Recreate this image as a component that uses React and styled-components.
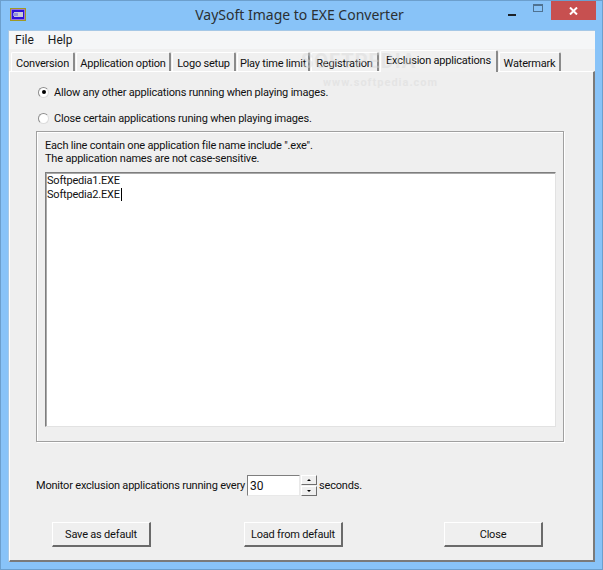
import styled, { createGlobalStyle } from "styled-components";

const Global = createGlobalStyle`
html, body {
    margin: 0;
    padding: 0;
    background: #88c3f8;
}
* {
    box-sizing: border-box;
}
`

const Window = styled.div`
    position: relative;
    width: 603px;
    height: 570px;
    display: flex;
    flex-direction: column;
    padding: 0 7px 7px;
    background: #88c3f8;
    border: 1px solid #6c9fcd;
    font-family: Roboto, "Liberation Sans", Arial, sans-serif;
    font-size: 11px;
    letter-spacing: -0.2px;
    color: #111;
    overflow: hidden;
`

const TitleBar = styled.div`
    height: 29px;
    flex: none;
    display: grid;
    grid-template-columns: 1fr auto 1fr;
    align-items: start;
`

const AppIcon = styled.svg`
    display: block;
    width: 16px;
    height: 13px;
    margin: 7px 0 0 2px;
`

const Title = styled.div`
    font-family: "Noto Sans", "Open Sans", sans-serif;
    font-size: 14px;
    letter-spacing: 0;
    line-height: 20px;
    margin-top: 4px;
    padding-right: 4px;
    color: #2b3033;
`

const Controls = styled.div`
    display: flex;
    justify-content: flex-end;
    height: 19px;
    margin-right: -1px;
`

const CtrlButton = styled.div`
    width: ${({ wide }) => wide ? '45px' : '26px'};
    height: 19px;
    display: flex;
    align-items: center;
    justify-content: center;
    background: ${({ wide }) => wide ? '#c75050' : 'transparent'};
`

const MinGlyph = styled.div`
    width: 8px;
    height: 2px;
    margin-top: 8px;
    background: #1c2228;
`

const MaxGlyph = styled.div`
    width: 10px;
    height: 8px;
    margin-top: -5px;
    border: 1px solid #4f7291;
    border-top-width: 2px;
`

const Client = styled.div`
    flex: 1;
    display: flex;
    flex-direction: column;
    background: #f0f0f0;
    border: 1px solid #a6c8e6;
    border-width: 1px 0 0 1px;
`

const MenuBar = styled.div`
    height: 18px;
    flex: none;
    display: flex;
    gap: 14px;
    align-items: center;
    padding-left: 6px;
    background: #f5f6f7;
    color: #1a1a1a;
`

const MenuItem = styled.span`
    font-size: 12px;
    letter-spacing: 0;
`

const TabRow = styled.div`
    height: 22px;
    flex: none;
    display: flex;
    align-items: flex-end;
    padding-left: 2px;
    gap: 1px;
    position: relative;
    z-index: 1;
`

const Tab = styled.div`
    height: ${({ active }) => active ? '22px' : '19px'};
    width: ${({ w }) => w}px;
    margin-bottom: ${({ active }) => active ? '-1px' : '0'};
    padding: ${({ active }) => active ? '0 0 2px' : '2px 0 0'};
    display: flex;
    align-items: center;
    justify-content: center;
    white-space: nowrap;
    background: #f0f0f0;
    border-top: 1px solid #fff;
    border-left: 1px solid #fff;
    border-right: 2px solid #8a8a8a;
    border-radius: 2px 2px 0 0;
`

const Panel = styled.div`
    flex: 1;
    display: flex;
    flex-direction: column;
    padding: 0 0 0 26px;
    background: #efefef;
    border-top: 1px solid #fff;
    border-left: 1px solid #fff;
    border-right: 2px solid #7a7a7a;
    border-bottom: 2px solid #7a7a7a;
`

const RadioRow = styled.div`
    display: flex;
    align-items: center;
    height: 14px;
    margin-top: ${({ top }) => top}px;
    padding-left: 2px;
`

const Radio = styled.span`
    width: 11px;
    height: 11px;
    flex: none;
    margin-right: 5px;
    border-radius: 50%;
    display: flex;
    align-items: center;
    justify-content: center;
    background: #fff;
    border: 1px solid #8d8d8d;
    border-right-color: #dcdcdc;
    border-bottom-color: #dcdcdc;
    &::after {
        content: "";
        display: ${({ checked }) => checked ? 'block' : 'none'};
        width: 4px;
        height: 4px;
        border-radius: 50%;
        background: #000;
    }
`

const GroupBox = styled.div`
    width: 528px;
    height: 311px;
    margin-top: 6px;
    padding: 7px 8px 0;
    border: 1px solid #a0a0a0;
    box-shadow: 1px 1px 0 #fff, inset 1px 1px 0 #fff;
`

const Hint = styled.div`
    line-height: 13px;
`

const Editor = styled.div`
    width: 511px;
    height: 255px;
    margin-top: 7px;
    padding: 1px 1px;
    background: #fff;
    border: 1px solid;
    border-color: #7e7e7e #e2e2e2 #e2e2e2 #7e7e7e;
    box-shadow: inset 1px 1px 0 #a9a9a9;
    line-height: 14px;
`

const EditorLine = styled.div`
    height: 14px;
`

const Caret = styled.span`
    display: inline-block;
    width: 1px;
    height: 13px;
    margin-left: 1px;
    background: #000;
    vertical-align: -3px;
`

const IntervalRow = styled.div`
    display: flex;
    align-items: center;
    height: 22px;
    margin-top: 32px;
`

const NumberBox = styled.div`
    width: 53px;
    height: 21px;
    margin-left: 2px;
    padding: 1px 0 0 2px;
    display: flex;
    align-items: center;
    background: #fff;
    border: 1px solid;
    border-color: #7e7e7e #e9e9e9 #e9e9e9 #7e7e7e;
    font-size: 12px;
    letter-spacing: 0;
`

const Spinner = styled.div`
    display: flex;
    flex-direction: column;
    gap: 1px;
    margin: 0 2px 0 1px;
`

const SpinButton = styled.div`
    width: 16px;
    height: 10px;
    display: flex;
    align-items: center;
    justify-content: center;
    background: #efefef;
    border: 1px solid;
    border-color: #fff #6e6e6e #6e6e6e #fff;
    &::after {
        content: "";
        border-left: 2px solid transparent;
        border-right: 2px solid transparent;
        border-${({ dir }) => dir === 'up' ? 'bottom' : 'top'}: 2px solid #000;
    }
`

const ButtonRow = styled.div`
    display: flex;
    margin-top: 26px;
    padding-left: 16px;
    gap: 93px;
`

const Button = styled.div`
    width: 99px;
    height: 25px;
    margin-right: ${({ gapRight }) => gapRight || 0}px;
    display: flex;
    align-items: center;
    justify-content: center;
    background: #efefef;
    border: 1px solid;
    border-color: #fff #6a6a6a #6a6a6a #fff;
    border-width: 1px 2px 2px 1px;
`

const GhostMark = styled.div`
    position: absolute;
    left: ${({ x }) => x}px;
    top: ${({ y }) => y}px;
    font-size: ${({ size }) => size}px;
    font-weight: bold;
    letter-spacing: 1px;
    color: #d6d6d6;
    opacity: 0.4;
    pointer-events: none;
    white-space: nowrap;
    z-index: 2;
`

const tabs = [
    { label: "Conversion", w: 64 },
    { label: "Application option", w: 95 },
    { label: "Logo setup", w: 64 },
    { label: "Play time limit", w: 73 },
    { label: "Registration", w: 68 },
    { label: "Exclusion applications", w: 118, active: true },
    { label: "Watermark", w: 62 },
]

const App = () => {
    return (
        <Window>
            <Global />
            <TitleBar>
                <AppIcon viewBox="0 0 16 13">
                    <rect x="0.5" y="0.5" width="15" height="12" fill="#2a12d8" stroke="#a09a22" />
                    <rect x="1.5" y="1.5" width="13" height="10" fill="none" stroke="#9a6fd8" />
                    <rect x="4" y="4" width="9" height="5" fill="#c9c9d8" />
                    <rect x="3" y="5" width="5" height="3" fill="#8f8fe0" />
                </AppIcon>
                <Title>VaySoft Image to EXE Converter</Title>
                <Controls>
                    <CtrlButton><MinGlyph /></CtrlButton>
                    <CtrlButton><MaxGlyph /></CtrlButton>
                    <CtrlButton wide>
                        <svg width="9" height="8" viewBox="0 0 9 8">
                            <path d="M1 0.5 L8 7.5 M8 0.5 L1 7.5" stroke="#fff" strokeWidth="2" />
                        </svg>
                    </CtrlButton>
                </Controls>
            </TitleBar>
            <Client>
                <MenuBar>
                    <MenuItem>File</MenuItem>
                    <MenuItem>Help</MenuItem>
                </MenuBar>
                <TabRow>
                    {tabs.map((tab) => (
                        <Tab key={tab.label} w={tab.w} active={tab.active}>{tab.label}</Tab>
                    ))}
                </TabRow>
                <Panel>
                    <RadioRow top={13}><Radio checked />Allow any other applications running when playing images.</RadioRow>
                    <RadioRow top={12}><Radio />Close certain applications runing when playing images.</RadioRow>
                    <GroupBox>
                        <Hint>Each line contain one application file name include ".exe".</Hint>
                        <Hint>The application names are not case-sensitive.</Hint>
                        <Editor>
                            <EditorLine>Softpedia1.EXE</EditorLine>
                            <EditorLine>Softpedia2.EXE<Caret /></EditorLine>
                        </Editor>
                    </GroupBox>
                    <IntervalRow>
                        Monitor exclusion applications running every
                        <NumberBox>30</NumberBox>
                        <Spinner>
                            <SpinButton dir="up" />
                            <SpinButton dir="down" />
                        </Spinner>
                        seconds.
                    </IntervalRow>
                    <ButtonRow>
                        <Button>Save as default</Button>
                        <Button gapRight={8}>Load from default</Button>
                        <Button>Close</Button>
                    </ButtonRow>
                </Panel>
            </Client>
            <GhostMark x={300} y={48} size={20}>SOFTPEDIA</GhostMark>
            <GhostMark x={322} y={75} size={11}>www.softpedia.com</GhostMark>
        </Window>
    );
}

export default App;
